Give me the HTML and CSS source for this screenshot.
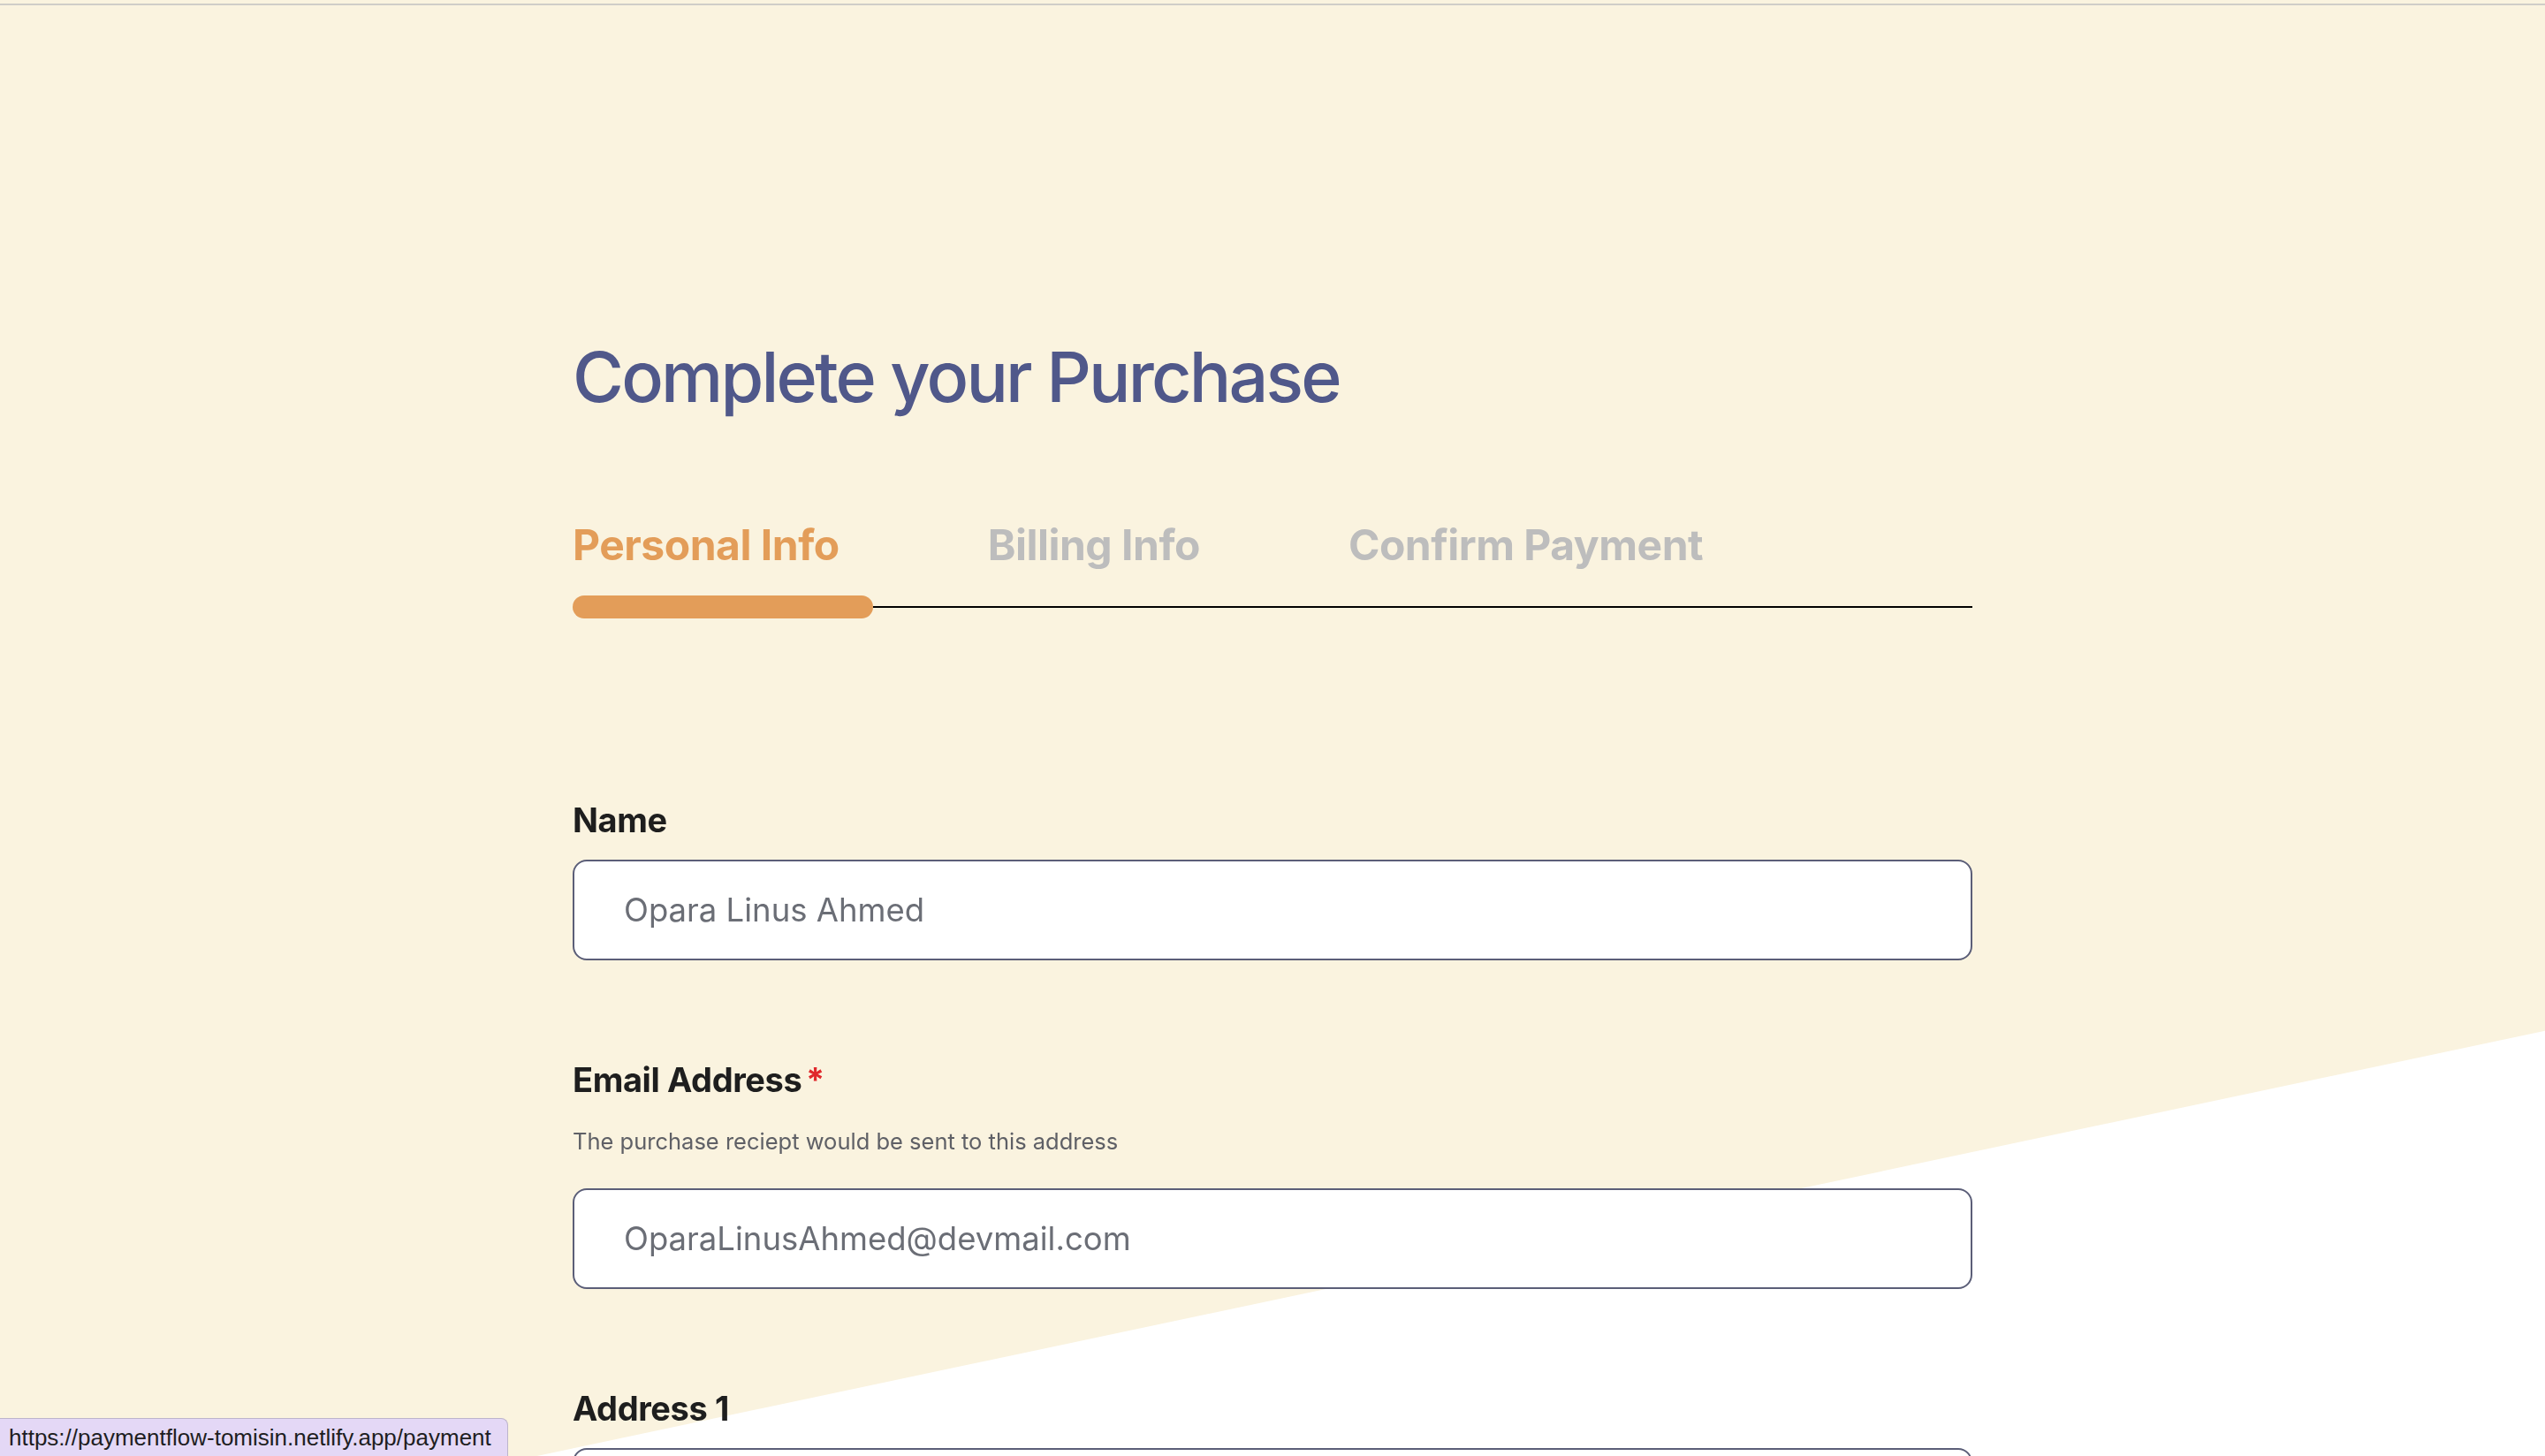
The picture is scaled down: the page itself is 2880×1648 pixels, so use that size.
FILE: index.html
```html
<!DOCTYPE html>
<html lang="en">
<head>
<meta charset="utf-8">
<title>Complete your Purchase</title>
<link rel="stylesheet" href="styles.css">
</head>
<body>
<div class="backdrop"></div>
<div class="topline"></div>
<main class="checkout">
  <h1 class="title">Complete your Purchase</h1>
  <nav class="tabs">
    <span class="tab tab-active">Personal Info</span>
    <span class="tab">Billing Info</span>
    <span class="tab">Confirm Payment</span>
  </nav>
  <div class="track">
    <div class="track-fill"></div>
    <div class="track-line"></div>
  </div>
  <form class="form">
    <div class="field field-first">
      <label class="label">Name</label>
      <div class="input">Opara Linus Ahmed</div>
    </div>
    <div class="field field-hinted">
      <label class="label">Email Address <span class="req">*</span></label>
      <p class="hint">The purchase reciept would be sent to this address</p>
      <div class="input">OparaLinusAhmed@devmail.com</div>
    </div>
    <div class="field">
      <label class="label">Address 1</label>
      <div class="input"></div>
    </div>
  </form>
</main>
<div class="status">https://paymentflow-tomisin.netlify.app/payment</div>
</body>
</html>
```

FILE: styles.css
```css
html, body {
  margin: 0;
  padding: 0;
}
body {
  background: #FAF3DF;
  font-family: Inter, "Noto Sans", sans-serif;
  height: 1648px;
  overflow: hidden;
  position: relative;
}
.backdrop {
  position: fixed;
  inset: 0;
  background: #ffffff;
  clip-path: polygon(100% 70.8%, 100% 100%, 21.1% 100%);
  z-index: 0;
}
.topline {
  position: relative;
  margin-top: 4px;
  height: 2px;
  background: #CFCDC8;
}
.checkout {
  position: relative;
  z-index: 1;
  width: 1584px;
  margin: 0 auto;
  padding-top: 372px;
}
.title {
  margin: 0;
  font-size: 79px;
  line-height: 96px;
  font-weight: 500;
  color: #50588A;
  letter-spacing: -2.8px;
}
.tabs {
  display: flex;
  gap: 168px;
  margin-top: 114px;
}
.tab {
  font-size: 48px;
  line-height: 58px;
  font-weight: 700;
  color: #BDBDBD;
  letter-spacing: -0.5px;
}
.tab-active {
  color: #E39D59;
}
.track {
  display: flex;
  align-items: center;
  height: 26px;
  margin-top: 28px;
}
.track-fill {
  width: 340px;
  height: 26px;
  border-radius: 13px;
  background: #E39D59;
}
.track-line {
  flex: 1;
  height: 2px;
  background: #000;
}
.form {
  display: flex;
  flex-direction: column;
  margin-top: 205px;
}
.field {
  display: flex;
  flex-direction: column;
  margin-top: 112px;
}
.field-first {
  margin-top: 0;
}
.label {
  font-size: 38px;
  line-height: 46px;
  font-weight: 700;
  color: #1E1E1E;
  margin-bottom: 22px;
  letter-spacing: -0.4px;
}
.req {
  color: #E0282C;
  margin-left: -4px;
}
.field-hinted .label {
  margin-bottom: 0;
}
.hint {
  margin: 31px 0 37px;
  font-size: 25.5px;
  line-height: 32px;
  color: #5F6066;
}
.input {
  box-sizing: border-box;
  height: 114px;
  border: 2px solid #5B5E78;
  border-radius: 16px;
  background: #fff;
  padding: 0 56px;
  display: flex;
  align-items: center;
  font-size: 36.5px;
  color: #6B6E76;
}
.status {
  position: fixed;
  left: 0;
  bottom: 0;
  z-index: 2;
  box-sizing: border-box;
  width: 575px;
  height: 43px;
  padding: 0 10px;
  display: flex;
  align-items: center;
  background: #E4D8F6;
  border: 1px solid #BDB4CC;
  border-left: none;
  border-bottom: none;
  border-top-right-radius: 8px;
  font-family: "Liberation Sans", Arial, sans-serif;
  font-size: 26px;
  color: #1E1E22;
}
```
